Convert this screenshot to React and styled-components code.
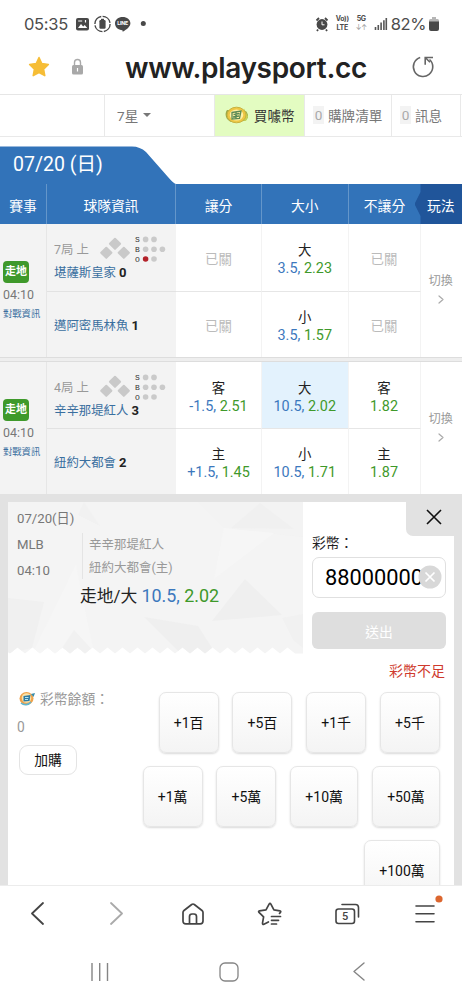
import React from 'react';
import styled, { createGlobalStyle, css } from 'styled-components';

const colors = {
  blue: '#3273b9',
  darkBlue: '#20559a',
  line: 'rgb(100, 150, 202)',
  odds: '#3c78bd',
  green: '#3f992b',
  team: '#3a6f9f',
  border: '#e9e9e9',
  panel: '#e2e2e2',
};

const GlobalStyle = createGlobalStyle`
  * { box-sizing: border-box; }
  body {
    margin: 0;
    background: #fff;
    color: #222;
    font-family: Roboto, "Noto Sans CJK TC", sans-serif;
    font-size: 14px;
  }
  svg { display: block; flex: none; }
  button, input { font-family: inherit; }
`;

const Screen = styled.div`
  width: 462px;
  height: 1000px;
  overflow: hidden;
  display: flex;
  flex-direction: column;
`;

/* status bar */

const StatusBar = styled.div`
  height: 47px;
  flex: none;
  display: flex;
  align-items: center;
  justify-content: space-between;
  padding: 0 23px 0 24px;
  color: #4c4c4c;
  font-family: Inter, sans-serif;
`;

const StatusGroup = styled.div`
  display: flex;
  align-items: center;
`;

const Clock = styled.span`
  font-size: 16.5px;
  letter-spacing: -0.3px;
  width: 51px;
`;

const Battery = styled.span`
  font-size: 16.5px;
  letter-spacing: -0.4px;
  margin-right: 3px;
`;

const Stacked = styled.span`
  display: flex;
  flex-direction: column;
  font-size: 7px;
  line-height: 8.5px;
  font-weight: 700;
  align-items: center;
  width: ${props => props.width};
  margin-right: ${props => props.gap};
  letter-spacing: -0.3px;
`;

const Arrows = styled.span`
  color: #999;
  font-weight: 400;
`;

/* address bar */

const AddressBar = styled.div`
  height: 48px;
  flex: none;
  display: flex;
  align-items: center;
  padding: 0 27px 7px;
  border-bottom: 1px solid #e6e6e6;
`;

const Lock = styled.div`
  margin-left: 20px;
`;

const Address = styled.div`
  flex: 1;
  font-family: Inter, sans-serif;
  font-weight: 600;
  font-size: 28px;
  letter-spacing: -0.33px;
  margin: 2px 0 0 41px;
  white-space: nowrap;
  color: #222;
`;

/* site navigation */

const Nav = styled.div`
  height: 42px;
  flex: none;
  display: grid;
  grid-template-columns: 105px 110px 90px 87px 69px 1px;
  border-bottom: 1px solid #e9e9e9;
`;

const NavItem = styled.div`
  display: flex;
  align-items: center;
  justify-content: ${props => props.justify || 'flex-start'};
  padding-left: ${props => props.indent || '0'};
  padding-bottom: 2px;
  border-right: 1px solid ${colors.border};
  background: ${props => (props.highlight ? '#e3fcc1' : '#fff')};
  color: ${props => (props.highlight ? '#333' : '#777')};
  font-size: 13.6px;
  white-space: nowrap;
`;

const Count = styled.span`
  background: #f3f3f3;
  color: #aaa;
  width: 11px;
  height: 18px;
  line-height: 18px;
  text-align: center;
  margin-right: 4px;
`;

const Caret = styled.span`
  border: 4px solid transparent;
  border-top-color: #777;
  border-bottom: 0;
  margin-left: 5px;
`;

/* odds table */

const DateTab = styled.div`
  margin-top: 9px;
  height: 38px;
  flex: none;
  width: 176px;
  padding: 2px 0 0 13px;
  background: ${colors.blue};
  clip-path: path('M0 0.5H132Q140 0.5 146 6L168 31Q174 38 176 38H0Z');
  color: #fff;
  font-size: 19.5px;
  line-height: 33px;
`;

const columns = css`
  display: grid;
  grid-template-columns: 47px 129px 86px 86.5px 72px 41.5px;
`;

const TableHead = styled.div`
  ${columns}
  height: 40px;
  flex: none;
  background: ${colors.blue};
`;

const HeadCell = styled.div`
  display: flex;
  align-items: center;
  justify-content: center;
  color: #fff;
  font-size: 13.8px;
  padding-top: 1px;
  border-right: ${props => (props.last ? '0' : `1px solid ${colors.line}`)};
`;

const PlayCell = styled(HeadCell)`
  border-right: 0;
  margin-left: -6px;
  padding-left: 5px;
  background: ${colors.darkBlue};
  clip-path: polygon(6px 0, 100% 0, 100% 100%, 6px 100%, 6px 32px, 0 20px, 6px 8px);
`;

const Game = styled.div`
  ${columns}
  flex: none;
  grid-template-rows: ${props => props.rows};
`;

const League = styled.div`
  grid-row: span 2;
  background: #f3f3f3;
  border-right: 1px solid #e6e6e6;
  padding: 37px 0 0 3px;
  white-space: nowrap;
  color: #777;
  font-size: 12.4px;
`;

const LiveTag = styled.div`
  width: 26px;
  height: 22px;
  line-height: 22px;
  border-radius: 4px;
  background: ${colors.green};
  color: #fff;
  font-weight: 700;
  font-size: 11px;
  text-align: center;
`;

const StartTime = styled.div`
  line-height: 16px;
  margin-top: 4px;
`;

const MatchLink = styled.div`
  color: ${colors.team};
  font-size: 9.3px;
  line-height: 14px;
  margin-top: 4px;
`;

const TeamCell = styled.div`
  display: flex;
  flex-direction: column;
  justify-content: ${props => (props.bottom ? 'center' : 'flex-start')};
  padding: ${props => (props.bottom ? '3px 0 0 7px' : '10px 0 0 7px')};
  background: #f3f3f3;
  border-top: ${props => (props.bottom ? '1px solid #e2e2e2' : '0')};
`;

const Inning = styled.div`
  display: flex;
  align-items: center;
  height: 30px;
  padding-bottom: 1px;
  color: #999;
  font-size: 12.4px;
  white-space: nowrap;

  > span {
    width: 45px;
    padding-top: 1px;
  }
`;

const Team = styled.div`
  color: ${colors.team};
  font-size: 12.4px;
  line-height: 18px;
  white-space: nowrap;

  b {
    color: #222;
    font-size: 13px;
  }
`;

const OddsCell = styled.div`
  display: flex;
  flex-direction: column;
  align-items: center;
  justify-content: center;
  background: ${props => (props.selected ? '#e3f2fd' : '#fff')};
  border-right: 1px solid #f3f3f3;
  border-top: ${props => (props.bottom ? '1px solid #e6e6e6' : '0')};
  padding-top: 5px;
  line-height: 18px;
  font-size: ${props => (props.closed ? '13.2px' : '14.4px')};
  color: ${props => (props.closed ? '#bbb' : '#222')};

  > span:first-child { font-size: 13.4px; }
`;

const Line = styled.span`
  color: ${colors.odds};
`;

const Price = styled.span`
  color: ${colors.green};
`;

const SwitchCell = styled.div`
  grid-column: 6;
  grid-row: 1 / span 2;
  display: flex;
  flex-direction: column;
  align-items: center;
  padding: 47px 1px 0 0;
  gap: 4px;
  color: #999;
  font-size: 12px;
  line-height: 20px;
`;

const Divider = styled.div`
  height: 5px;
  flex: none;
  background: #eee;
  border: 1px solid #ddd;
  border-width: 1px 0;
`;

/* betting slip */

const Slip = styled.div`
  height: 391px;
  flex: none;
  overflow: hidden;
  background: ${colors.panel};
  padding: 8px 8px 0;
`;

const SlipBody = styled.div`
  height: 383px;
  background: #fff;
`;

const SlipTop = styled.div`
  display: flex;
  height: 151px;
`;

const Ticket = styled.div`
  position: relative;
  width: 295px;
  color: #777;
  font-size: 13.2px;
`;

const Backdrop = styled.svg`
  position: absolute;
  top: 0;
  left: 0;
`;

const TicketContent = styled.div`
  position: relative;
  padding: 4px 0 0 9px;
  line-height: 26px;
`;

const TicketRow = styled.div`
  display: flex;
`;

const TicketMeta = styled.div`
  width: 65px;
`;

const TicketTeams = styled.div`
  height: 46px;
  margin-top: 1px;
  padding-left: 6px;
  border-left: 1px solid #e4e4e4;
  color: #999;
  font-size: 12.5px;
  line-height: 23px;
`;

const Pick = styled.div`
  padding-left: 63px;
  margin-top: -1px;
  font-size: 16.8px;
  line-height: 26px;
  color: #222;
  white-space: nowrap;

  > span { font-size: 17.9px; }
`;

const Stake = styled.div`
  flex: 1;
  display: flex;
  flex-direction: column;
  padding: 0 8px 0 9px;
`;

const CloseButton = styled.button`
  align-self: flex-end;
  display: grid;
  place-items: center;
  flex: none;
  width: 48px;
  height: 34px;
  margin-right: -8px;
  padding: 0 0 4px 7px;
  border: 0;
  border-bottom-left-radius: 7px;
  background: ${colors.panel};
`;

const StakeLabel = styled.label`
  font-size: 13.8px;
  line-height: 18px;
  margin-top: -2px;
  padding-left: 1px;
`;

const StakeField = styled.div`
  display: flex;
  align-items: center;
  flex: none;
  height: 41px;
  margin: 5px 0 0 1px;
  padding: 0 3px 1px 12px;
  border: 1px solid #e0e0e0;
  border-radius: 7px;
`;

const StakeValue = styled.div`
  width: 96px;
  overflow: hidden;
  font-size: 21.8px;
  color: #000;
`;

const SubmitButton = styled.button`
  flex: none;
  height: 37px;
  margin: 14px 0 0 1px;
  border: 0;
  border-radius: 6px;
  background: #dedede;
  color: #fff;
  font-size: 13.8px;
`;

const Warning = styled.div`
  height: 39px;
  padding: 8px 9px 0 0;
  line-height: 20px;
  text-align: right;
  color: #cf3a2d;
  font-size: 14px;
`;

const SlipBottom = styled.div`
  display: flex;
  justify-content: space-between;
  padding: 0 14px 0 9px;
`;

const Balance = styled.div`
  margin-top: -1px;
  color: #999;
  font-size: 13.8px;
`;

const BalanceLabel = styled.div`
  display: flex;
  align-items: center;
  gap: 4px;
  height: 14px;
  padding-left: 2px;
  white-space: nowrap;
`;

const BalanceValue = styled.div`
  margin-top: 12px;
  line-height: 20px;
`;

const TopUpButton = styled.button`
  width: 58px;
  height: 30px;
  margin: 8px 0 0 2px;
  padding: 0 0 2px;
  border: 1px solid #e4e4e4;
  border-radius: 9px;
  background: #fff;
  color: #111;
  font-size: 13.8px;
`;

const Chips = styled.div`
  width: 300px;
  display: flex;
  flex-wrap: wrap;
  justify-content: flex-end;
  gap: 13px 13.8px;
`;

const Chip = styled.button`
  width: ${props => props.width};
  height: 61px;
  padding: 0 0 2px;
  border: 1px solid #e6e6e6;
  border-radius: 7px;
  background: linear-gradient(#fff, #f4f4f4);
  box-shadow: 0 1px 2px rgba(0, 0, 0, 0.15);
  color: #111;
  font-size: 14px;
`;

/* browser and system bars */

const BrowserBar = styled.div`
  height: 58px;
  flex: none;
  display: grid;
  grid-template-columns: 78px 79px 75px 77.500px 77.500px 77.400px;
  align-items: center;
  justify-content: center;
  justify-items: center;
  padding-bottom: 2px;
  border-top: 1px solid #ececec;
`;

const SystemBar = styled.div`
  height: 57px;
  flex: none;
  display: grid;
  grid-template-columns: 129px 134px 1fr;
  align-items: center;
  padding-left: 90px;
`;

const StatusIcons = () => (
  <svg width="72" height="20" viewBox="0 0 72 20">
    <rect x="1" y="4" width="13" height="12.5" rx="2" fill="#484848" />
    <path d="M3 14l3-4 2.2 2.5 1.5-1.5 2.6 3z" fill="#fff" />
    <path d="M3.2 7h4M10.5 6v2.5" stroke="#fff" strokeWidth="1.2" />
    <circle cx="27.5" cy="10" r="7.6" fill="none" stroke="#484848" strokeWidth="1.4" strokeDasharray="10.5 1.4" />
    <rect x="24.4" y="6" width="6.2" height="8.8" rx="1.2" fill="#484848" />
    <rect x="26" y="4.8" width="3" height="2" fill="#484848" />
    <path d="M47.7 3c4.3 0 7.7 2.7 7.7 6.2 0 3.3-3.8 6.3-7.2 8.2-.7.4-.8-.2-.7-1.2-4.2-.2-7.5-3.1-7.5-7C40 5.7 43.4 3 47.7 3z" fill="#484848" />
    <text x="42.2" y="11" fontSize="5.2" fontWeight="700" fill="#fff" fontFamily="Inter, sans-serif" textLength="11">LINE</text>
    <circle cx="68.3" cy="9.6" r="2.5" fill="#484848" />
  </svg>
);

const AlarmIcon = () => (
  <svg width="20" height="16" viewBox="0 0 20 16">
    <circle cx="7" cy="8.5" r="5.4" fill="#484848" />
    <path d="M1.5 4.5L4 2M12.5 4.5L10 2M3 13.5L2 15M11 13.5l1 1.5" stroke="#484848" strokeWidth="1.8" />
    <path d="M7 5.5v3.3h2.5" stroke="#fff" fill="none" />
  </svg>
);

const SignalIcon = () => (
  <svg width="17" height="14" viewBox="0 0 17 14">
    <path d="M1.5 13v-3M4.3 13V8M7.1 13V5.5M9.9 13V3.2M12.3 13V1" stroke="#555" strokeWidth="1.6" />
  </svg>
);

const BatteryIcon = () => (
  <svg width="10" height="14" viewBox="0 0 10 14">
    <path d="M3 0h4v2h1.5Q10 2 10 3.5V5H0V3.5Q0 2 1.5 2H3z" fill="#b5b5b5" />
    <path d="M0 4.500h10V12q0 2-2 2H2q-2 0-2-2z" fill="#484848" />
  </svg>
);

const StarIcon = () => (
  <svg width="24" height="24" viewBox="0 0 24 24">
    <path d="M12 2.5l2.8 6 6.600 .9-4.800 4.700 1.200 6.600L12 17.500l-5.800 3.200 1.200-6.600L2.600 9.400l6.600-.9z" fill="#f6bd36" stroke="#f6bd36" strokeWidth="1.5" strokeLinejoin="round" />
  </svg>
);

const LockIcon = () => (
  <svg width="13" height="18" viewBox="0 0 13 18">
    <path d="M3.5 8V4.500a3 3 0 016 0V8" fill="none" stroke="#aaa" strokeWidth="1.4" />
    <rect x="1" y="7" width="11" height="9.5" rx="1.5" fill="#a8a8a8" />
    <path d="M6.5 10v3.500" stroke="#fff" strokeWidth="1.2" />
  </svg>
);

const ReloadIcon = () => (
  <svg width="24" height="24" viewBox="0 0 24 24">
    <path d="M9.2 2.5A9.7 9.7 0 1018.5 4.5" fill="none" stroke="#666" strokeWidth="1.6" />
    <path d="M22 2.5h-7.8v7.3M14.5 2.8l4.5 4.5" fill="none" stroke="#666" strokeWidth="1.6" />
  </svg>
);

const GreenCoin = () => (
  <svg width="26" height="20" viewBox="0 0 26 20">
    <path d="M3 5C0 9 2 15 7 17l13-1c5-2 5-6 2-10z" fill="#9aa845" />
    <path d="M20 3.5l4 8-2 4.5-4-1z" fill="#c5d456" />
    <ellipse cx="12.5" cy="10" rx="9.5" ry="7.8" fill="#edc744" stroke="#c9b23f" />
    <ellipse cx="12.5" cy="10" rx="6.8" ry="5.6" fill="#fff0a4" />
    <path d="M8 7.5l9-1.5-1.500 7.500L8 14zM9.500 9.500l6-1M9 12l6-1M12 6.500v7" fill="none" stroke="#5b8a55" strokeWidth="1.3" />
  </svg>
);

const OrangeCoin = () => (
  <svg width="17" height="16" viewBox="0 0 17 16">
    <ellipse cx="7.5" cy="8.5" rx="7" ry="6.5" fill="#efa24b" />
    <path d="M2 13a7 7 0 0010-1" fill="none" stroke="#61b5cf" strokeWidth="1.6" />
    <circle cx="7.5" cy="8" r="4.8" fill="#fbe3a9" />
    <path d="M4.5 6l7-1-1 6-6 .5z" fill="#2e7ba4" />
    <path d="M6 7.5h3.5M6 9.5h3" stroke="#b6e3ef" />
    <path d="M12 4l4-1-1.5 4z" fill="#368cab" />
  </svg>
);

const Bases = () => (
  <svg width="34" height="25" viewBox="0 0 34 25">
    {[[16, 7.8], [7.3, 16.8], [24.8, 16.8]].map(([x, y]) => (
      <rect key={x} x={x - 4.6} y={y - 4.6} width="9.2" height="9.2" rx="1" fill="#c9c9c9" transform={`rotate(45 ${x} ${y})`} />
    ))}
  </svg>
);

const CountBoard = ({ outs }) => (
  <svg width="34" height="30" viewBox="0 0 34 30">
    {['S', 'B', 'O'].map((label, row) => (
      <g key={label}>
        <text x="4.5" y={8 + row * 9.8} fontSize="8" textAnchor="middle" fontFamily="Liberation Mono, monospace" fill="#333">{label}</text>
        {Array.from({ length: label === 'B' ? 3 : 2 }, (_, i) => (
          <circle key={i} cx={12.6 + i * 8.4} cy={5.4 + row * 9.8} r="2.8" fill={label === 'O' && i < outs ? '#b3222a' : '#cacaca'} />
        ))}
      </g>
    ))}
  </svg>
);

const teeth = Array.from({ length: 20 }, (_, i) => `L${287 - i * 15} 151.5L${279.5 - i * 15} 145.5`).join('');

const TicketBackdrop = () => (
  <Backdrop width="295" height="152" viewBox="0 0 295 152">
    <clipPath id="ticket"><path d={`M0 0H295V151.5${teeth}L0 148Z`} /></clipPath>
    <g clipPath="url(#ticket)">
      <path d="M0 0h295v152H0z" fill="#f4f4f4" />
      <path d="M0 96l36 4-12 46L0 152z" fill="#f0f0f0" />
      <path d="M68 63L24 152h62z" fill="#f6f6f6" />
      <path d="M66 128l22 24H50z" fill="#f1f1f1" />
      <path d="M136 115l54 9 18 28h-35z" fill="#efefef" />
      <path d="M204 119l33-42 37 36z" fill="#efefef" />
      <path d="M274 116l21-4v34l-10-8z" fill="#f1f1f1" />
      <path d="M223 26l29-25 34 26z" fill="#efefef" />
      <path d="M190 0l26 26 79 9V0z" fill="#f2f2f2" opacity="0.5" />
      <path d="M76 0l16 24L70 13z" fill="#f1f1f1" />
      <path d="M216 26l50 5-60 46z" fill="#f6f6f6" />
    </g>
  </Backdrop>
);

const Chevron = ({ color, flip, width = 13, height = 23, weight = 1.8 }) => (
  <svg width={width} height={height} viewBox={`0 0 ${width} ${height}`}>
    <path
      d={flip
        ? `M1 1L${width - 1} ${height / 2}L1 ${height - 1}`
        : `M${width - 1} 1L1 ${height / 2}L${width - 1} ${height - 1}`}
      fill="none"
      stroke={color}
      strokeWidth={weight}
      strokeLinejoin="round"
      strokeLinecap="round"
    />
  </svg>
);

const CrossIcon = () => (
  <svg width="16" height="16" viewBox="0 0 16 16">
    <path d="M1 1l14 14M15 1L1 15" stroke="#111" strokeWidth="1.6" />
  </svg>
);

const ClearButton = styled.svg`
  margin-left: -3px;
`;

const ClearIcon = () => (
  <ClearButton width="24" height="24" viewBox="0 0 24 24">
    <circle cx="12" cy="12" r="11.5" fill="#d8d8d8" />
    <path d="M7.5 7.5l9 9M16.5 7.5l-9 9" stroke="#fff" strokeWidth="1.7" />
  </ClearButton>
);

const HomeIcon = () => (
  <svg width="22" height="22" viewBox="0 0 22 22">
    <path d="M1 9.5Q1 8.3 2 7.5l7.7-6q1.3-1 2.6 0l7.7 6q1 .8 1 2V18q0 2.8-2.8 2.8H3.8Q1 20.8 1 18z" fill="none" stroke="#444" strokeWidth="1.7" />
    <path d="M7.5 20.5v-7q0-2.5 2.5-2.5h2q2.5 0 2.5 2.5v7" fill="none" stroke="#444" strokeWidth="1.7" />
  </svg>
);

const BookmarksIcon = () => (
  <svg width="26" height="24" viewBox="0 0 26 24">
    <path d="M22.5 11.3l1-1q.7-1.2-.6-1.5l-6-.9-3-5.8q-.9-1.4-1.8 0L9 7.9l-6.5.9q-1.5.4-.5 1.6l4.6 4.5-1.1 6.3q0 1.6 1.4 1l4.5-2.3" fill="none" stroke="#444" strokeWidth="1.7" strokeLinecap="round" strokeLinejoin="round" />
    <path d="M14.5 14.5h9M14.5 18.3h7M14.5 22h5" stroke="#444" strokeWidth="1.7" strokeLinecap="round" />
  </svg>
);

const TabsIcon = () => (
  <svg width="25" height="22" viewBox="0 0 25 22">
    <rect x="1" y="6" width="18.5" height="14.5" rx="2.5" fill="none" stroke="#444" strokeWidth="1.6" />
    <path d="M7 1.5h13.5q3 0 3 3V14" fill="none" stroke="#444" strokeWidth="1.6" strokeLinecap="round" />
    <text x="10.2" y="17.3" fontSize="11" fontWeight="500" textAnchor="middle" fill="#444" fontFamily="Roboto, sans-serif">5</text>
  </svg>
);

const MenuIcon = () => (
  <svg width="36" height="38" viewBox="-2 0 36 38">
    <path d="M7 11h18M7 18.8h18M7 26.7h18" stroke="#444" strokeWidth="1.6" strokeLinecap="round" />
    <circle cx="30" cy="4" r="3.6" fill="#dc662f" />
  </svg>
);

const RecentsIcon = () => (
  <svg width="20" height="20" viewBox="0 0 20 20">
    <path d="M2 1v18M9.7 1v18M17.5 1v18" stroke="#858585" strokeWidth="1.4" />
  </svg>
);

const SystemHomeIcon = () => (
  <svg width="20" height="20" viewBox="0 0 20 20">
    <rect x="1" y="1" width="18" height="18" rx="5" fill="none" stroke="#858585" strokeWidth="1.3" />
  </svg>
);

const games = [
  {
    id: 'g1',
    rows: '67px 66px',
    inning: '7局 上',
    outs: 1,
    away: ['堪薩斯皇家', 0],
    home: ['邁阿密馬林魚', 1],
    top: [null, { side: '大', line: '3.5', price: '2.23' }, null],
    bottom: [null, { side: '小', line: '3.5', price: '1.57' }, null],
  },
  {
    id: 'g2',
    rows: '66px 66px',
    inning: '4局 上',
    outs: 0,
    away: ['辛辛那堤紅人', 3],
    home: ['紐約大都會', 2],
    top: [
      { side: '客', line: '-1.5', price: '2.51' },
      { side: '大', line: '10.5', price: '2.02', selected: true },
      { side: '客', price: '1.82' },
    ],
    bottom: [
      { side: '主', line: '+1.5', price: '1.45' },
      { side: '小', line: '10.5', price: '1.71' },
      { side: '主', price: '1.87' },
    ],
  },
];

const chips = [
  ['+1百', '60px'], ['+5百', '60px'], ['+1千', '60px'], ['+5千', '60px'],
  ['+1萬', '60px'], ['+5萬', '60px'], ['+10萬', '68px'], ['+50萬', '68px'],
  ['+100萬', '76px'],
];

const Odds = ({ odds, bottom }) => {
  if (!odds) return <OddsCell closed bottom={bottom}><span>已關</span></OddsCell>;
  return (
    <OddsCell selected={odds.selected} bottom={bottom}>
      <span>{odds.side}</span>
      <div>
        {odds.line && <Line>{odds.line}, </Line>}
        <Price>{odds.price}</Price>
      </div>
    </OddsCell>
  );
};

const GameRow = ({ game }) => (
  <Game rows={game.rows}>
    <League>
      <LiveTag>走地</LiveTag>
      <StartTime>04:10</StartTime>
      <MatchLink>對戰資訊</MatchLink>
    </League>
    <TeamCell>
      <Inning>
        <span>{game.inning}</span>
        <Bases />
        <CountBoard outs={game.outs} />
      </Inning>
      <Team>{game.away[0]} <b>{game.away[1]}</b></Team>
    </TeamCell>
    {game.top.map((odds, i) => <Odds key={i} odds={odds} />)}
    <SwitchCell>
      切換
      <Chevron flip color="#aaa" width={6} height={9} weight={1.2} />
    </SwitchCell>
    <TeamCell bottom>
      <Team>{game.home[0]} <b>{game.home[1]}</b></Team>
    </TeamCell>
    {game.bottom.map((odds, i) => <Odds key={i} odds={odds} bottom />)}
  </Game>
);

const BetSlip = () => (
  <Slip>
    <SlipBody>
      <SlipTop>
        <Ticket>
          <TicketBackdrop />
          <TicketContent>
            <div>07/20(日)</div>
            <TicketRow>
              <TicketMeta>
                <div>MLB</div>
                <div>04:10</div>
              </TicketMeta>
              <TicketTeams>
                <div>辛辛那堤紅人</div>
                <div>紐約大都會(主)</div>
              </TicketTeams>
            </TicketRow>
            <Pick>走地/大 <Line>10.5, </Line><Price>2.02</Price></Pick>
          </TicketContent>
        </Ticket>
        <Stake>
          <CloseButton><CrossIcon /></CloseButton>
          <StakeLabel>彩幣：</StakeLabel>
          <StakeField>
            <StakeValue>88000000</StakeValue>
            <ClearIcon />
          </StakeField>
          <SubmitButton>送出</SubmitButton>
        </Stake>
      </SlipTop>
      <Warning>彩幣不足</Warning>
      <SlipBottom>
        <Balance>
          <BalanceLabel><OrangeCoin />彩幣餘額：</BalanceLabel>
          <BalanceValue>0</BalanceValue>
          <TopUpButton>加購</TopUpButton>
        </Balance>
        <Chips>
          {chips.map(([label, width]) => <Chip key={label} width={width}>{label}</Chip>)}
        </Chips>
      </SlipBottom>
    </SlipBody>
  </Slip>
);

const App = () => (
  <Screen>
    <GlobalStyle />
    <StatusBar>
      <StatusGroup>
        <Clock>05:35</Clock>
        <StatusIcons />
      </StatusGroup>
      <StatusGroup>
        <AlarmIcon />
        <Stacked width="15px" gap="5px"><span>Vo))</span><span>LTE</span></Stacked>
        <Stacked width="13px" gap="6px"><span>5G</span><Arrows>↓↑</Arrows></Stacked>
        <SignalIcon />
        <Battery>82%</Battery>
        <BatteryIcon />
      </StatusGroup>
    </StatusBar>
    <AddressBar>
      <StarIcon />
      <Lock><LockIcon /></Lock>
      <Address>www.playsport.cc</Address>
      <ReloadIcon />
    </AddressBar>
    <Nav>
      <NavItem />
      <NavItem indent="12px">7星<Caret /></NavItem>
      <NavItem highlight justify="center"><GreenCoin />&nbsp;買噱幣</NavItem>
      <NavItem indent="8px"><Count>0</Count>購牌清單</NavItem>
      <NavItem indent="8px"><Count>0</Count>訊息</NavItem>
    </Nav>
    <DateTab>07/20 (日)</DateTab>
    <TableHead>
      <HeadCell>賽事</HeadCell>
      <HeadCell>球隊資訊</HeadCell>
      <HeadCell>讓分</HeadCell>
      <HeadCell>大小</HeadCell>
      <HeadCell last>不讓分</HeadCell>
      <PlayCell>玩法</PlayCell>
    </TableHead>
    <GameRow game={games[0]} />
    <Divider />
    <GameRow game={games[1]} />
    <BetSlip />
    <BrowserBar>
      <Chevron color="#444" />
      <Chevron flip color="#aaa" />
      <HomeIcon />
      <BookmarksIcon />
      <TabsIcon />
      <MenuIcon />
    </BrowserBar>
    <SystemBar>
      <RecentsIcon />
      <SystemHomeIcon />
      <Chevron color="#858585" width={12} height={19} weight={1.4} />
    </SystemBar>
  </Screen>
);

export default App;
